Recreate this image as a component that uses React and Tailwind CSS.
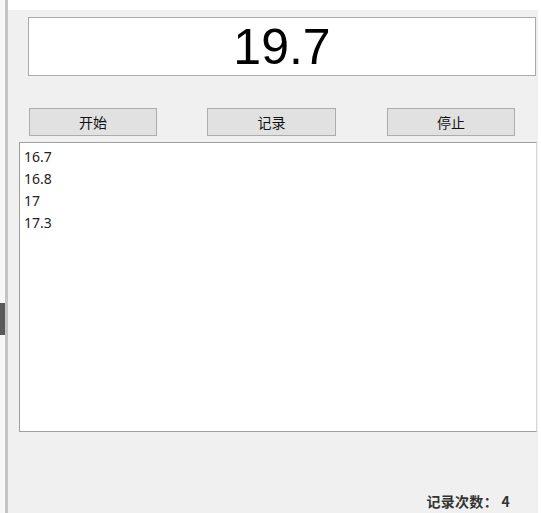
export default function App() {
  const records = ['16.7', '16.8', '17', '17.3'];
  const cjk = { fontFamily: '"Noto Sans CJK SC", "Noto Sans", sans-serif' };

  return (
    <div className="flex h-[513px] w-[541px] overflow-hidden bg-white">
      {/* window behind, on the left */}
      <div className="flex w-[5px] flex-col bg-[#f7f7f7]">
        <div className="mt-[303px] h-[32px] bg-[#5a5a5a]" />
      </div>
      <div className="w-[3px] bg-[#c4c4c4]" />

      {/* main window */}
      <div className="mt-[10px] flex w-[530px] flex-col bg-[#f0f0f0]">
        <div
          className="ml-[20px] mt-[7px] flex h-[59px] w-[508px] items-center justify-center border border-[#a9a9a9] bg-white text-[50px] leading-none text-black"
          style={{ fontFamily: '"Liberation Sans", Arial, sans-serif' }}
        >
          19.7
        </div>

        <div className="mt-[32px] flex pl-[21px]" style={cjk}>
          <button className="h-[28px] w-[128px] border border-[#adadad] bg-[#e1e1e1] text-[14px] text-[#111]">
            开始
          </button>
          <button className="ml-[50px] h-[28px] w-[129px] border border-[#adadad] bg-[#e1e1e1] text-[14px] text-[#111]">
            记录
          </button>
          <button className="ml-[51px] h-[28px] w-[128px] border border-[#adadad] bg-[#e1e1e1] text-[14px] text-[#111]">
            停止
          </button>
        </div>

        <div
          className="ml-[11px] mt-[6px] flex h-[290px] w-[518px] flex-col border border-t-[#a0a0a0] border-l-[#a0a0a0] border-r-[#d6d6d6] border-b-[#a0a0a0] bg-white pl-[4px] pt-[3px] text-[14px] leading-[22px] text-[#222]"
          style={{ fontFamily: '"Noto Sans", "Open Sans", sans-serif' }}
        >
          {records.map((r, i) => (
            <div key={i}>{r}</div>
          ))}
        </div>

        <div className="mt-auto flex justify-end pb-[1px] pr-[28px]">
          <span className="text-[14px] font-semibold tracking-[0.3px] text-[#333]" style={cjk}>
            记录次数：&nbsp;4
          </span>
        </div>
      </div>
    </div>
  );
}
